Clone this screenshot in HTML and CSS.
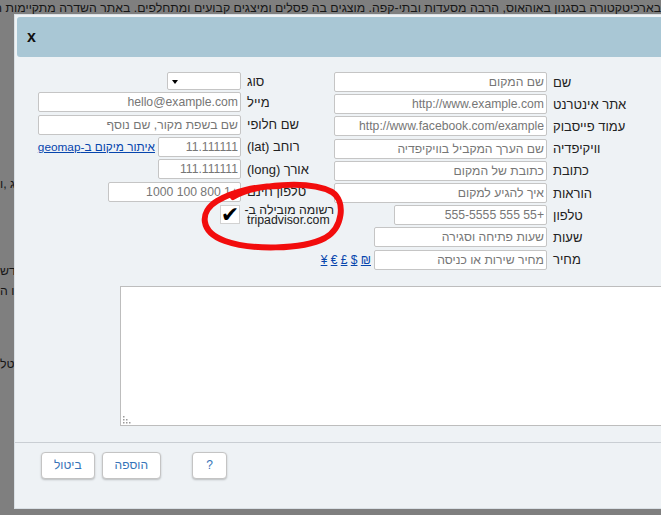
FILE: index.html
```html
<!DOCTYPE html>
<html lang="he" dir="rtl">
<head>
<meta charset="utf-8">
<title>הוספת רשומה</title>
<link rel="stylesheet" href="styles.css">
</head>
<body>
<div class="page">
  <div class="bgline bgline-top">בארכיטקטורה בסגנון באוהאוס, הרבה מסעדות ובתי-קפה. מוצגים בה פסלים ומיצגים קבועים ומתחלפים. באתר השדרה מתקיימות הופעות ואירועים</div>
  <div class="bgline bgline-frag f1">מסעדות החג ,ו</div>
  <div class="bgline bgline-frag f2">והבתים החדש</div>
  <div class="bgline bgline-frag f3">ומזרקה בו ה</div>
  <div class="bgline bgline-frag f4">ואפשר נטל</div>
</div>

<div class="dialog">
  <div class="titlebar"><span class="close">x</span></div>
  <div class="content">
    <div class="form">
      <div class="tbl tbl-main">
        <label class="lbl">שם</label>
        <div class="cell"><input class="inp inp-full" placeholder="שם המקום"></div>
        <label class="lbl">אתר אינטרנט</label>
        <div class="cell"><input class="inp inp-full" placeholder="http://www.example.com"></div>
        <label class="lbl">עמוד פייסבוק</label>
        <div class="cell"><input class="inp inp-full" placeholder="http://www.facebook.com/example"></div>
        <label class="lbl">וויקיפדיה</label>
        <div class="cell"><input class="inp inp-full" placeholder="שם הערך המקביל בוויקיפדיה"></div>
        <label class="lbl">כתובת</label>
        <div class="cell"><input class="inp inp-full" placeholder="כתובת של המקום"></div>
        <label class="lbl">הוראות</label>
        <div class="cell"><input class="inp inp-full" placeholder="איך להגיע למקום"></div>
        <label class="lbl">טלפון</label>
        <div class="cell"><input class="inp inp-phone" placeholder="+55 555 555-5555"></div>
        <label class="lbl">שעות</label>
        <div class="cell"><input class="inp inp-hours" placeholder="שעות פתיחה וסגירה"></div>
        <label class="lbl">מחיר</label>
        <div class="cell"><input class="inp inp-hours" placeholder="מחיר שירות או כניסה"><span class="currency"><a href="#">₪</a> <a href="#">$</a> <a href="#">£</a> <a href="#">€</a> <a href="#">¥</a></span></div>
      </div>
      <div class="tbl tbl-side">
        <label class="lbl">סוג</label>
        <div class="cell"><span class="select-wrap"><select class="inp inp-select"></select></span></div>
        <label class="lbl">מייל</label>
        <div class="cell"><input class="inp inp-full" placeholder="hello@example.com"></div>
        <label class="lbl">שם חלופי</label>
        <div class="cell"><input class="inp inp-full" placeholder="שם בשפת מקור, שם נוסף"></div>
        <label class="lbl">רוחב (lat)</label>
        <div class="cell"><input class="inp inp-coord" placeholder="11.111111"><a href="#" class="geolink">איתור מיקום ב-geomap</a></div>
        <label class="lbl">אורך (long)</label>
        <div class="cell"><input class="inp inp-coord" placeholder="111.111111"></div>
        <label class="lbl">טלפון חינם</label>
        <div class="cell"><input class="inp inp-tollfree" placeholder="+1 800 100 1000"></div>
        <label class="lbl lbl-multi">רשומה מובילה ב-<br>tripadvisor.com</label>
        <div class="cell"><span class="check">✔</span></div>
      </div>
    </div>
    <div class="desc">
      <textarea class="desc-area"></textarea>
      <svg class="grip" width="9" height="9" viewBox="0 0 9 9">
        <rect x="0" y="1" width="1.5" height="1.5" fill="#9a9a9a"/>
        <rect x="0" y="4" width="1.5" height="1.5" fill="#9a9a9a"/>
        <rect x="0" y="7" width="1.5" height="1.5" fill="#9a9a9a"/>
        <rect x="3" y="4" width="1.5" height="1.5" fill="#9a9a9a"/>
        <rect x="3" y="7" width="1.5" height="1.5" fill="#9a9a9a"/>
        <rect x="6" y="7" width="1.5" height="1.5" fill="#9a9a9a"/>
      </svg>
    </div>
  </div>
  <div class="buttonpane">
    <button class="btn btn-help">?</button>
    <button class="btn btn-add">הוספה</button>
    <button class="btn">ביטול</button>
  </div>
</div>

<svg class="annot" width="661" height="515" viewBox="0 0 661 515">
  <path d="M 233 197 C 255 184, 310 180, 332 192 C 346 201, 343 228, 325 238 C 302 250, 250 250, 225 241 C 200 232, 199 212, 217 201 C 232 192, 255 186, 280 186" fill="none" stroke="#f20d0d" stroke-width="6" stroke-linecap="round" stroke-linejoin="round"/>
</svg>
</body>
</html>
```

FILE: styles.css
```css
html, body {
  margin: 0;
  height: 100%;
  overflow: hidden;
}

body {
  background: #7f7f7f;
  color: #161616;
  font-family: "Liberation Sans", Arial, "DejaVu Sans", sans-serif;
  font-size: 13px;
  direction: rtl;
}

/* background page (dimmed) */
.bgline {
  white-space: nowrap;
  overflow: hidden;
  height: 16px;
  line-height: 16px;
  font-size: 12.3px;
}
.bgline-top { text-align: right; }
.bgline-frag { text-align: left; }
.f1 { margin-top: 160px; }
.f2 { margin-top: 71px; }
.f3 { margin-top: 4px; }
.f4 { margin-top: 57px; }

/* dialog */
.dialog {
  position: absolute;
  left: 14px;
  top: 14px;
  width: 720px;
  height: 495px;
  box-sizing: border-box;
  padding: 2px;
  background: #eef2f5;
  border: 1px solid #d9e0e5;
  color: #222;
  display: flex;
  flex-direction: column;
}

.titlebar {
  height: 40px;
  flex: none;
  background: #a9c7d5;
  border-radius: 3px;
  display: flex;
  align-items: center;
  justify-content: flex-end;
  padding-left: 10px;
}
.close {
  font-weight: bold;
  font-size: 16px;
  line-height: 1;
  color: #111;
  margin-top: -1px;
}

.content {
  padding: 14px 0 0 21px;
}

.form {
  display: flex;
  justify-content: flex-end;
}

.tbl {
  display: grid;
  column-gap: 6px;
  align-content: start;
}
.tbl-main {
  grid-template-columns: 110px 213px;
  grid-auto-rows: 22.2px;
}
.tbl-side {
  grid-template-columns: 87px 203px;
  grid-template-rows: 20px;
  grid-auto-rows: 22.4px;
}

.lbl {
  text-align: left;
  align-self: center;
  white-space: nowrap;
  font-size: 13px;
  color: #222;
}
.lbl-multi {
  line-height: 10px;
  font-size: 12.3px;
  padding-top: 1px;
}

.cell {
  display: flex;
  align-items: center;
  gap: 3px;
  min-width: 0;
}

.inp {
  height: 20px;
  box-sizing: border-box;
  border: 1px solid #c5c5c5;
  border-radius: 2px;
  background: #fff;
  padding: 0 2px;
  margin: 0;
  font-family: "Liberation Sans", Arial, sans-serif;
  font-size: 12.2px;
  color: #333;
  direction: rtl;
  outline: none;
  flex: none;
}
.inp::placeholder { color: #767676; opacity: 1; }
.inp-full { width: 100%; flex: 1 1 auto; }
.inp-phone { width: 153px; }
.inp-hours { width: 173px; }
.inp-coord { width: 83px; }
.inp-tollfree { width: 133px; }

.select-wrap {
  position: relative;
  display: block;
}
.inp-select {
  width: 74px;
  height: 18px;
  appearance: none;
  -webkit-appearance: none;
  display: block;
}
.select-wrap::after {
  content: "";
  position: absolute;
  left: 5px;
  top: 8px;
  border-left: 3px solid transparent;
  border-right: 3px solid transparent;
  border-top: 4px solid #000;
}

a {
  color: #0645ad;
  text-decoration: underline;
}
.geolink {
  font-size: 11.8px;
  white-space: nowrap;
}
.currency {
  font-size: 12px;
  white-space: nowrap;
}

.check {
  width: 20px;
  height: 19px;
  box-sizing: border-box;
  margin-right: 1px;
  margin-top: 1px;
  border: 1px solid #d2d2d2;
  background: #fff;
  display: flex;
  align-items: center;
  justify-content: center;
  font-family: "DejaVu Sans", sans-serif;
  font-size: 22px;
  line-height: 1;
  color: #000;
  overflow: visible;
}

.desc {
  position: relative;
  margin-top: 15px;
  padding-left: 82px;
}
.desc-area {
  display: block;
  width: 100%;
  height: 140px;
  box-sizing: border-box;
  border: 1px solid #bdbdbd;
  background: #fff;
  resize: none;
  margin: 0;
}
.grip {
  position: absolute;
  left: 85px;
  bottom: 2px;
}

.buttonpane {
  margin: 16px -2px 0;
  border-top: 1px solid #c9ced3;
  padding: 9px 0 0 26px;
  display: flex;
  justify-content: flex-end;
  align-items: flex-start;
}
.btn {
  height: 27px;
  padding: 0 12px;
  background: #fff;
  border: 1px solid #c4c4c4;
  border-radius: 4px;
  box-shadow: 0 1px 2px rgba(0, 0, 0, 0.22);
  color: #3673b8;
  font-family: "Liberation Sans", Arial, sans-serif;
  font-size: 12px;
  margin: 0;
}
.btn-help {
  min-width: 35px;
  margin-left: 31px;
}
.btn-add {
  margin-left: 7px;
}

.annot {
  position: absolute;
  left: 0;
  top: 0;
  pointer-events: none;
}
```
